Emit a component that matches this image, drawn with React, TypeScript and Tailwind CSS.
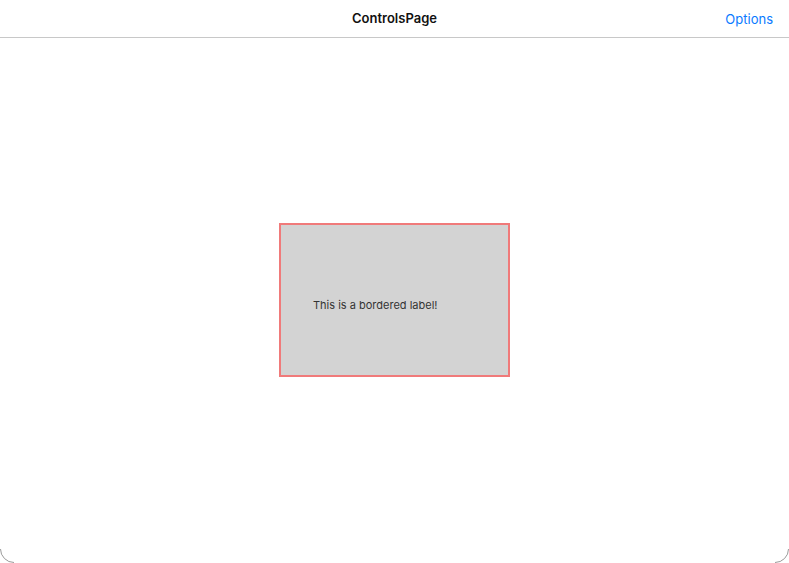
export default function App() {
  return (
    <div
      className="relative flex h-[563px] w-[789px] flex-col bg-white"
      style={{ fontFamily: "Inter, 'Liberation Sans', sans-serif" }}
    >
      <div className="relative flex h-[38px] items-center justify-center border-b border-[#c8c8c8]">
        <span className="text-[13px] font-semibold text-[#111]">ControlsPage</span>
        <span className="absolute right-[16px] top-[10px] text-[13px] text-[#0a7aff]">Options</span>
      </div>
      <div className="flex flex-1 items-center justify-center pb-[2px]">
        <div className="flex h-[154px] w-[231px] items-center border-2 border-[#f07a7a] bg-[#d3d3d3] pl-[32px] pt-[12px]">
          <span className="text-[11px] text-[#333]">This is a bordered label!</span>
        </div>
      </div>
      <svg className="absolute bottom-0 left-0" width="14" height="14" viewBox="0 0 14 14">
        <path d="M0.5 0 A13.5 13.5 0 0 0 14 13.5" fill="none" stroke="#9a9a9a" strokeWidth="1" />
      </svg>
      <svg className="absolute bottom-0 right-0" width="14" height="14" viewBox="0 0 14 14">
        <path d="M13.5 0 A13.5 13.5 0 0 1 0 13.5" fill="none" stroke="#9a9a9a" strokeWidth="1" />
      </svg>
    </div>
  );
}
